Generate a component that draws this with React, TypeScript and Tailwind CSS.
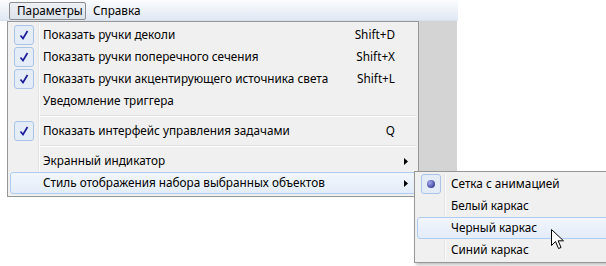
import React from 'react';

type Item =
  | { kind: 'sep' }
  | { kind: 'item'; label: string; checked?: boolean; shortcut?: string; sub?: boolean; active?: boolean };

const items: Item[] = [
  { kind: 'item', label: 'Показать ручки деколи', checked: true, shortcut: 'Shift+D' },
  { kind: 'item', label: 'Показать ручки поперечного сечения', checked: true, shortcut: 'Shift+X' },
  { kind: 'item', label: 'Показать ручки акцентирующего источника света', checked: true, shortcut: 'Shift+L' },
  { kind: 'item', label: 'Уведомление триггера' },
  { kind: 'sep' },
  { kind: 'item', label: 'Показать интерфейс управления задачами', checked: true, shortcut: 'Q' },
  { kind: 'sep' },
  { kind: 'item', label: 'Экранный индикатор', sub: true },
  { kind: 'item', label: 'Стиль отображения набора выбранных объектов', sub: true, active: true },
];

const subItems = [
  { label: 'Сетка с анимацией', radio: true },
  { label: 'Белый каркас' },
  { label: 'Черный каркас', active: true },
  { label: 'Синий каркас' },
];

function Check() {
  return (
    <svg width="12" height="12" viewBox="0 0 12 12">
      <path d="M2.5 6.5 L5 9.5 L9.5 2" fill="none" stroke="#1b1b9c" strokeWidth="1.7" />
    </svg>
  );
}

function Arrow() {
  return (
    <svg width="4" height="7" viewBox="0 0 4 7">
      <path d="M0 0 L4 3.5 L0 7 Z" fill="#000" />
    </svg>
  );
}

function MarkBox({ children }: { children: React.ReactNode }) {
  return (
    <div className="w-[20px] h-[20px] rounded-[3px] border border-[#a8c4e8] bg-[#e4ecf8] flex items-center justify-center">
      {children}
    </div>
  );
}

function Row({ item }: { item: Extract<Item, { kind: 'item' }> }) {
  return (
    <div
      className={
        'relative flex items-center h-[22px] rounded-[3px] border ' +
        (item.active
          ? 'border-[#aeccf1] bg-gradient-to-b from-[#f2f6fc] to-[#e3ecf9]'
          : 'border-transparent')
      }
    >
      <div className="w-[24px] flex justify-center pl-[1px]">{item.checked && <MarkBox><Check /></MarkBox>}</div>
      <div className="ml-[8px] flex-1 text-black">{item.label}</div>
      {item.shortcut && <div className="pr-[20px] text-right">{item.shortcut}</div>}
      {item.sub && (
        <div className="w-[11px] flex items-center">
          <Arrow />
        </div>
      )}
    </div>
  );
}

function Cursor() {
  return (
    <svg width="14" height="22" viewBox="0 0 14 22" className="absolute left-[551px] top-[229px]">
      <path
        d="M0.5 0.5 L0.5 16.5 L4.5 12.5 L7.5 19.5 L10 18.5 L7.2 11.8 L12.5 11.8 Z"
        fill="#fff"
        stroke="#000"
        strokeWidth="1"
        strokeLinejoin="round"
      />
    </svg>
  );
}

export default function App() {
  return (
    <div
      className="relative w-[606px] h-[266px] bg-white overflow-hidden text-[11.75px] leading-none"
      style={{ fontFamily: '"Noto Sans", "Open Sans", sans-serif' }}
    >
      {/* Menu bar */}
      <div className="w-[458px] h-[21px] bg-gradient-to-b from-[#fbfcfe] to-[#e0e8f4] border-b border-[#d9e1ec] flex items-center">
        <div className="ml-[9px] mt-[2px] h-[18px] w-[77px] pl-[7px] flex items-center border border-[#8d8d8d] rounded-[2px] bg-gradient-to-b from-[#eef1f6] to-[#dde3eb]">
          Параметры
        </div>
        <div className="ml-[7px] mt-[2px]">Справка</div>
      </div>

      <div className="flex">
        {/* Main dropdown */}
        <div className="ml-[7px] w-[412px] h-[176px] border border-[#979797] bg-[#f0f0f0] px-[2px] pt-[2px] relative">
          <div className="absolute left-[30px] top-[2px] bottom-[2px] w-[2px] border-l border-[#e2e3e3] bg-white/70" />
          {items.map((it, i) =>
            it.kind === 'sep' ? (
              <div key={i} className="h-[8px] flex items-center pl-[30px]">
                <div className="w-full h-[2px] border-t border-[#e0e0e0] bg-white" />
              </div>
            ) : (
              <Row key={i} item={it} />
            )
          )}
        </div>
        <div className="w-[38px] h-[150px] bg-[#d4d4d4]" />
      </div>

      {/* Submenu */}
      <div className="absolute left-[414px] top-[171px] w-[200px] h-[92px] border border-[#979797] bg-[#f0f0f0] px-[2px] pt-[1px] shadow-[2px_2px_3px_rgba(0,0,0,0.25)]">
        <div className="absolute left-[29px] top-[2px] bottom-[2px] w-[2px] border-l border-[#e2e3e3] bg-white/70" />
        {subItems.map((s, i) => (
          <div
            key={i}
            className={
              'relative flex items-center h-[22px] rounded-[3px] border ' +
              (s.active
                ? 'border-[#aeccf1] bg-gradient-to-b from-[#f2f6fc] to-[#e3ecf9]'
                : 'border-transparent')
            }
          >
            <div className="w-[24px] flex justify-center pl-[1px]">
              {s.radio && (
                <MarkBox>
                  <div className="w-[8px] h-[8px] rounded-full bg-[radial-gradient(circle_at_35%_35%,#a4a8ee,#1e1e80)]" />
                </MarkBox>
              )}
            </div>
            <div className="ml-[9px]">{s.label}</div>
          </div>
        ))}
      </div>

      <Cursor />
    </div>
  );
}
